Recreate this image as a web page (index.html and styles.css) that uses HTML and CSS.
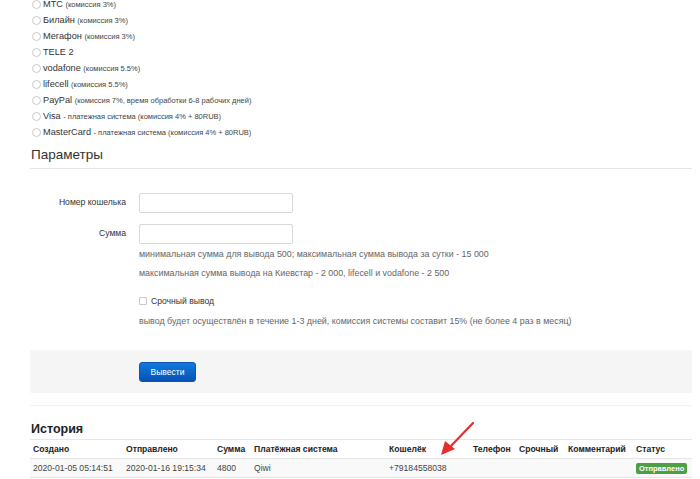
FILE: index.html
```html
<!DOCTYPE html>
<html lang="ru">
<head>
<meta charset="utf-8">
<link rel="stylesheet" href="styles.css">
</head>
<body>
<div class="page">
  <ul class="systems">
    <li><span class="radio"></span><span class="text"><span class="name">МТС</span> <small>(комиссия 3%)</small></span></li>
    <li><span class="radio"></span><span class="text"><span class="name">Билайн</span> <small>(комиссия 3%)</small></span></li>
    <li><span class="radio"></span><span class="text"><span class="name">Мегафон</span> <small>(комиссия 3%)</small></span></li>
    <li><span class="radio"></span><span class="text"><span class="name">TELE 2</span></span></li>
    <li><span class="radio"></span><span class="text"><span class="name">vodafone</span> <small>(комиссия 5.5%)</small></span></li>
    <li><span class="radio"></span><span class="text"><span class="name">lifecell</span> <small>(комиссия 5.5%)</small></span></li>
    <li><span class="radio"></span><span class="text"><span class="name">PayPal</span> <small>(комиссия 7%, время обработки 6-8 рабочих дней)</small></span></li>
    <li><span class="radio"></span><span class="text"><span class="name">Visa</span> <small>- платежная система (комиссия 4% + 80RUB)</small></span></li>
    <li><span class="radio"></span><span class="text"><span class="name">MasterCard</span> <small>- платежная система (комиссия 4% + 80RUB)</small></span></li>
  </ul>

  <h2 class="legend">Параметры</h2>

  <div class="form">
    <div class="row">
      <label class="label">Номер кошелька</label>
      <div class="field"><span class="input"></span></div>
    </div>
    <div class="row row-sum">
      <label class="label">Сумма</label>
      <div class="field">
        <span class="input"></span>
        <p class="help help-first">минимальная сумма для вывода 500; максимальная сумма вывода за сутки - 15 000</p>
        <p class="help">максимальная сумма вывода на Киевстар - 2 000, lifecell и vodafone - 2 500</p>
        <div class="check"><span class="box"></span>Срочный вывод</div>
        <p class="help">вывод будет осуществлён в течение 1-3 дней, комиссия системы составит 15% (не более 4 раз в месяц)</p>
      </div>
    </div>
  </div>

  <div class="actions">
    <span class="btn">Вывести</span>
  </div>
  <div class="sep"></div>

  <h3 class="history">История</h3>
  <table class="tbl">
    <colgroup>
      <col class="c1"><col class="c2"><col class="c3"><col class="c4"><col class="c5"><col class="c6"><col class="c7"><col class="c8"><col class="c9">
    </colgroup>
    <thead>
      <tr><th>Создано</th><th>Отправлено</th><th>Сумма</th><th>Платёжная система</th><th>Кошелёк</th><th>Телефон</th><th>Срочный</th><th>Комментарий</th><th>Статус</th></tr>
    </thead>
    <tbody>
      <tr><td>2020-01-05 05:14:51</td><td>2020-01-16 19:15:34</td><td>4800</td><td>Qiwi</td><td>+79184558038</td><td></td><td></td><td></td><td><span class="badge">Отправлено</span></td></tr>
    </tbody>
  </table>

  <svg class="arrow" width="40" height="40" viewBox="0 0 40 40">
    <line x1="37" y1="3" x2="14" y2="27" stroke="#e5302a" stroke-width="2.2" stroke-linecap="round"/>
    <polygon points="5,35 9,21 19,29" fill="#e5302a"/>
  </svg>
</div>
</body>
</html>
```

FILE: styles.css
```css
* { box-sizing: border-box; }
html, body { margin: 0; padding: 0; background: #fff; }
body {
  font-family: "Liberation Sans", Arial, sans-serif;
  color: #333;
  font-size: 9px;
  overflow: hidden;
  height: 479px;
}
.page {
  position: relative;
  padding-left: 30px;
  width: 692px;
}
.systems {
  list-style: none;
  margin: -4px 0 0 0;
  padding: 0 0 0 2px;
}
.systems li {
  height: 16px;
  display: flex;
  align-items: center;
}
.text { white-space: nowrap; }
.radio {
  width: 9px;
  height: 9px;
  border: 1px solid #c9c9c9;
  border-radius: 50%;
  margin-right: 2px;
  background: #fff;
  flex: none;
}
.name { font-size: 9.2px; color: #333; }
.systems small { font-size: 7.5px; color: #444; }

.legend {
  margin: 6px 0 0 0;
  padding: 0 0 4px 1px;
  font-size: 13.5px;
  font-weight: normal;
  line-height: 18px;
  color: #333;
  border-bottom: 1px solid #e5e5e5;
}
.form { padding-top: 24px; }
.row { display: flex; align-items: flex-start; }
.row-sum { margin-top: 11px; }
.label {
  width: 96px;
  text-align: right;
  font-size: 8.6px;
  line-height: 19px;
  margin-right: 13px;
  color: #333;
}
.field { display: flex; flex-direction: column; align-items: flex-start; }
.input {
  display: block;
  width: 154px;
  height: 20px;
  border: 1px solid #d9d9d9;
  border-radius: 2px;
  background: #fff;
}
.help {
  margin: 0;
  font-size: 8.9px;
  line-height: 19px;
  color: #666;
  white-space: nowrap;
}
.help-first { margin-top: 1px; }
.check {
  display: flex;
  align-items: center;
  margin-top: 8px;
  height: 19px;
  font-size: 8.6px;
  color: #333;
}
.box {
  width: 8px;
  height: 8px;
  border: 1px solid #c9c9c9;
  border-radius: 1px;
  margin-right: 4px;
}
.check + .help { margin-top: 2px; }

.actions {
  margin-top: 19px;
  background: #f5f5f5;
  height: 43px;
  padding: 12px 0 0 109px;
}
.btn {
  display: inline-block;
  width: 57px;
  height: 20px;
  line-height: 18px;
  text-align: center;
  color: #fff;
  font-size: 8.5px;
  border-radius: 3px;
  background: linear-gradient(#1279dd, #0553b5);
  border: 1px solid #0a56b0;
}
.sep {
  margin-top: 12px;
  border-top: 1px solid #f1f1f1;
}
.history {
  margin: 16px 0 0 1px;
  font-size: 12.5px;
  font-weight: bold;
  line-height: 14px;
  color: #222;
}
.tbl {
  margin-top: 3px;
  width: 662px;
  border-collapse: collapse;
  table-layout: fixed;
  font-size: 8.6px;
}
.c1 { width: 93px; } .c2 { width: 91px; } .c3 { width: 37px; }
.c4 { width: 135px; } .c5 { width: 84px; } .c6 { width: 46px; }
.c7 { width: 49px; } .c8 { width: 68px; } .c9 { width: 59px; }
.tbl th, .tbl td {
  text-align: left;
  padding: 0 3px;
  height: 19px;
  white-space: nowrap;
  overflow: visible;
  border-top: 1px solid #e6e6e6;
}
.tbl th { font-weight: bold; color: #222; }
.tbl td { color: #444; }
.tbl tbody tr { background: #f9f9f9; }
.tbl tbody td { border-bottom: 1px solid #e6e6e6; }
.badge {
  display: inline-block;
  background: #4f9e45;
  color: #fff;
  font-size: 7.5px;
  font-weight: bold;
  padding: 1px 3px;
  border-radius: 2px;
  line-height: 9px;
}
.arrow {
  position: absolute;
  left: 436px;
  top: 424px;
}
```
